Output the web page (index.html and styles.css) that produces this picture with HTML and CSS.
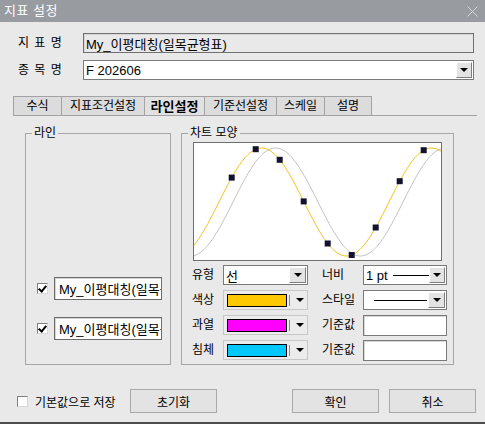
FILE: index.html
```html
<!DOCTYPE html>
<html lang="ko">
<head>
    <meta charset="UTF-8">
    <title>지표 설정</title>
    <link rel="stylesheet" href="styles.css">
</head>
<body>
    <div class="window">
        <div class="titlebar">
            <span class="title">지표 설정</span>
            <svg class="close" width="11" height="11" viewBox="0 0 11 11">
                <path d="M0.5 0.5 L10.5 10.5 M10.5 0.5 L0.5 10.5" stroke="#d4d6d9" stroke-width="1" fill="none"/>
            </svg>
        </div>

        <div class="content">
            <!-- Indicator name / symbol -->
            <div class="field-row">
                <span class="field-label">지 표 명</span>
                <div class="textbox readonly">My_이평대칭(일목균형표)</div>
            </div>
            <div class="field-row">
                <span class="field-label">종 목 명</span>
                <div class="combo white">
                    <span class="combo-text">F 202606</span>
                    <span class="drop-btn"><i class="arrow"></i></span>
                </div>
            </div>

            <!-- Tabs -->
            <div class="tabs">
                <div class="tab w48">수식</div>
                <div class="tab w83">지표조건설정</div>
                <div class="tab w60 active">라인설정</div>
                <div class="tab w72">기준선설정</div>
                <div class="tab w48">스케일</div>
                <div class="tab w48 last">설명</div>
            </div>

            <div class="page">
                <!-- Line list -->
                <div class="group line-group">
                    <span class="group-caption">라인</span>
                    <div class="line-item">
                        <span class="check checked"></span>
                        <div class="textbox item-box">My_이평대칭(일목균형표)</div>
                    </div>
                    <div class="line-item">
                        <span class="check checked"></span>
                        <div class="textbox item-box">My_이평대칭(일목균형표)</div>
                    </div>
                </div>

                <!-- Chart shape -->
                <div class="group chart-group">
                    <span class="group-caption">차트 모양</span>
                    <div class="chart">
                        <svg id="preview" width="247" height="117" viewBox="0 0 247 117">
                            <polyline id="baseLine" fill="none" stroke="#c2c2c2" stroke-width="1"/>
                            <polyline id="mainLine" fill="none" stroke="#f2c21c" stroke-width="1"/>
                            <g id="markers"></g>
                        </svg>
                    </div>

                    <div class="props">
                        <span class="prop-label">유형</span>
                        <div class="combo white small">
                            <span class="combo-text">선</span>
                            <span class="drop-btn"><i class="arrow"></i></span>
                        </div>
                        <span class="prop-label right">너비</span>
                        <div class="combo white small">
                            <span class="combo-text">1 pt <b class="dash short"></b></span>
                            <span class="drop-btn"><i class="arrow"></i></span>
                        </div>

                        <span class="prop-label">색상</span>
                        <div class="color-combo">
                            <span class="swatch yellow"></span>
                            <span class="sep"></span>
                            <i class="arrow"></i>
                        </div>
                        <span class="prop-label right">스타일</span>
                        <div class="combo white small">
                            <span class="combo-text"><b class="dash long"></b></span>
                            <span class="drop-btn"><i class="arrow"></i></span>
                        </div>

                        <span class="prop-label">과열</span>
                        <div class="color-combo">
                            <span class="swatch magenta"></span>
                            <span class="sep"></span>
                            <i class="arrow"></i>
                        </div>
                        <span class="prop-label right">기준값</span>
                        <div class="textbox value-box"></div>

                        <span class="prop-label">침체</span>
                        <div class="color-combo">
                            <span class="swatch cyan"></span>
                            <span class="sep"></span>
                            <i class="arrow"></i>
                        </div>
                        <span class="prop-label right">기준값</span>
                        <div class="textbox value-box"></div>
                    </div>
                </div>
            </div>

            <!-- Bottom buttons -->
            <div class="footer">
                <span class="check plain"></span>
                <span class="save-label">기본값으로 저장</span>
                <button class="btn reset-btn">초기화</button>
                <button class="btn ok-btn">확인</button>
                <button class="btn">취소</button>
            </div>
        </div>
    </div>

    <script>
        // Preview: main line, its shifted base line and point markers
        const W = 247;
        function wave(x, shift) {
            return 59 - 54 * Math.cos(2 * Math.PI * (x - 67.5 - shift) / 170);
        }

        const mainPts = [];
        const basePts = [];
        for (let x = 0; x <= W; x++) {
            mainPts.push(x + ',' + wave(x, 0).toFixed(1));
            basePts.push(x + ',' + wave(x, 14).toFixed(1));
        }
        document.getElementById('mainLine').setAttribute('points', mainPts.join(' '));
        document.getElementById('baseLine').setAttribute('points', basePts.join(' '));

        const markers = document.getElementById('markers');
        for (let i = 0; i < 9; i++) {
            const x = 37.7 + i * 24;
            const y = wave(x, 0);
            const r = document.createElementNS('http://www.w3.org/2000/svg', 'rect');
            r.setAttribute('x', (x - 3).toFixed(1));
            r.setAttribute('y', (y - 3).toFixed(1));
            r.setAttribute('width', 6);
            r.setAttribute('height', 6);
            r.setAttribute('fill', '#12122e');
            markers.appendChild(r);
        }
    </script>
</body>
</html>
```

FILE: styles.css
```css
* {
    margin: 0;
    padding: 0;
    box-sizing: border-box;
}

body {
    background: #e9e9e9;
    font-family: 'Liberation Sans', 'Noto Sans CJK KR', sans-serif;
    font-size: 12px;
    color: #000;
}

.window {
    width: 485px;
    height: 424px;
    background: #e9e9e9;
    border-bottom: 2px solid #4d4d4d;
    overflow: hidden;
}

.titlebar {
    height: 22px;
    background: #989ba0;
    display: flex;
    align-items: center;
    justify-content: space-between;
    padding: 0 7px 0 4px;
}

.titlebar .title {
    color: #fff;
    font-size: 13px;
    line-height: 22px;
    letter-spacing: 0.5px;
}

.content {
    padding: 11px 8px 0 13px;
}

/* Name rows */
.field-row {
    display: flex;
    align-items: center;
    height: 20px;
    margin: 0 3px 7px 5px;
}

.field-label {
    width: 65px;
    font-size: 12px;
    letter-spacing: 1px;
    line-height: 20px;
}

.textbox {
    background: #fff;
    border: 1px solid #828282;
    box-shadow: inset 1px 1px 0 #d6d6d6;
    display: flex;
    align-items: center;
    padding-left: 2px;
    white-space: nowrap;
    overflow: hidden;
    font-size: 13px;
}

.textbox.readonly {
    flex: 1;
    height: 20px;
    background: #e9e9e9;
    border-color: #707070;
}

.combo {
    display: flex;
    align-items: center;
    border: 1px solid #7a7a7a;
    height: 20px;
}

.combo.white {
    background: #fff;
    flex: 1;
}

.combo-text {
    flex: 1;
    padding-left: 2px;
    font-size: 13px;
    white-space: nowrap;
    display: flex;
    align-items: center;
}

.drop-btn {
    width: 16px;
    height: 16px;
    margin-right: 1px;
    background: #e3e3e3;
    border-top: 1px solid #fff;
    border-left: 1px solid #fff;
    border-right: 1px solid #7f7f7f;
    border-bottom: 1px solid #7f7f7f;
    display: flex;
    align-items: center;
    justify-content: center;
}

.arrow {
    width: 0;
    height: 0;
    border-left: 4px solid transparent;
    border-right: 4px solid transparent;
    border-top: 4px solid #000;
}

/* Tabs */
.tabs {
    display: flex;
    margin-top: 16px;
    border-bottom: 1px solid #a3a3a3;
}

.tab {
    height: 19px;
    background: #dcdcdc;
    border-left: 1px solid #a3a3a3;
    border-top: 1px solid #a3a3a3;
    display: flex;
    align-items: center;
    justify-content: center;
    font-size: 12px;
    line-height: 19px;
}

.tab.last {
    border-right: 1px solid #a3a3a3;
}

.tab.active {
    font-weight: bold;
    font-size: 13px;
    background: #e1e1e1;
}

.w48 { width: 48px; }
.w60 { width: 60px; }
.w72 { width: 72px; }
.w83 { width: 83px; }

/* Group boxes */
.page {
    display: flex;
    gap: 10px;
    margin: 17px 0 0 12px;
}

.group {
    position: relative;
    border: 1px solid #a6a6a6;
    height: 232px;
}

.group-caption {
    position: absolute;
    top: -9px;
    left: 6px;
    padding: 0 2px;
    background: #e9e9e9;
    font-size: 12px;
    line-height: 16px;
}

.line-group {
    width: 146px;
    display: flex;
    flex-direction: column;
    justify-content: flex-end;
    gap: 17px;
    padding: 0 0 24px 11px;
}

.line-item {
    display: flex;
    align-items: center;
    gap: 6px;
}

.item-box {
    width: 108px;
    height: 23px;
    background: #fff;
    border-color: #6c6c6c;
    padding-left: 4px;
}

.check {
    width: 11px;
    height: 11px;
    background: #fff;
    border-top: 1px solid #808080;
    border-left: 1px solid #808080;
    border-right: 1px solid #d8d8d8;
    border-bottom: 1px solid #d8d8d8;
    position: relative;
}

.check.checked::after {
    content: '';
    position: absolute;
    left: 2px;
    top: 0;
    width: 3px;
    height: 6px;
    border-right: 2px solid #000;
    border-bottom: 2px solid #000;
    transform: rotate(40deg);
}

.chart-group {
    width: 273px;
    padding: 8px 0 0 11px;
}

.chart {
    width: 249px;
    height: 119px;
    border: 1px solid #6e6e6e;
    background: #fff;
}

.chart svg {
    display: block;
}

/* Line properties */
.props {
    display: grid;
    grid-template-columns: 31px 85px 55px 84px;
    grid-auto-rows: 20px;
    row-gap: 5px;
    margin: 4px 0 0 -1px;
    align-items: center;
}

.prop-label {
    font-size: 12px;
    line-height: 20px;
    white-space: nowrap;
}

.prop-label.right {
    padding-left: 14px;
}

.combo.small {
    height: 20px;
}

.combo.small .drop-btn {
    width: 17px;
}

.dash {
    display: inline-block;
    height: 1px;
    background: #000;
    margin-left: 5px;
}

.dash.short { width: 36px; }
.dash.long { width: 53px; margin-left: 8px; }

.color-combo {
    height: 20px;
    border: 1px solid #c6c6c6;
    background: #ececec;
    display: flex;
    align-items: center;
    padding-left: 3px;
}

.swatch {
    width: 60px;
    height: 13px;
    border: 1px solid #000;
}

.swatch.yellow { background: #ffc800; }
.swatch.magenta { background: #ff00ff; }
.swatch.cyan { background: #00c8ff; }

.sep {
    width: 1px;
    height: 11px;
    background: #8a8a8a;
    margin: 0 6px 0 2px;
}

.value-box {
    height: 21px;
    border-color: #7a7a7a;
}

/* Footer */
.footer {
    display: flex;
    align-items: center;
    margin: 24px 0 0 4px;
    height: 24px;
}

.check.plain {
    margin-right: 7px;
}

.save-label {
    font-size: 12px;
    width: 95px;
}

.btn {
    width: 87px;
    height: 24px;
    background: #e3e3e3;
    border: 1px solid #a9a9a9;
    font-family: 'Liberation Sans', 'Noto Sans CJK KR', sans-serif;
    font-size: 12px;
}

.reset-btn {
    margin-right: 75px;
}

.ok-btn {
    margin-right: 10px;
}
```
